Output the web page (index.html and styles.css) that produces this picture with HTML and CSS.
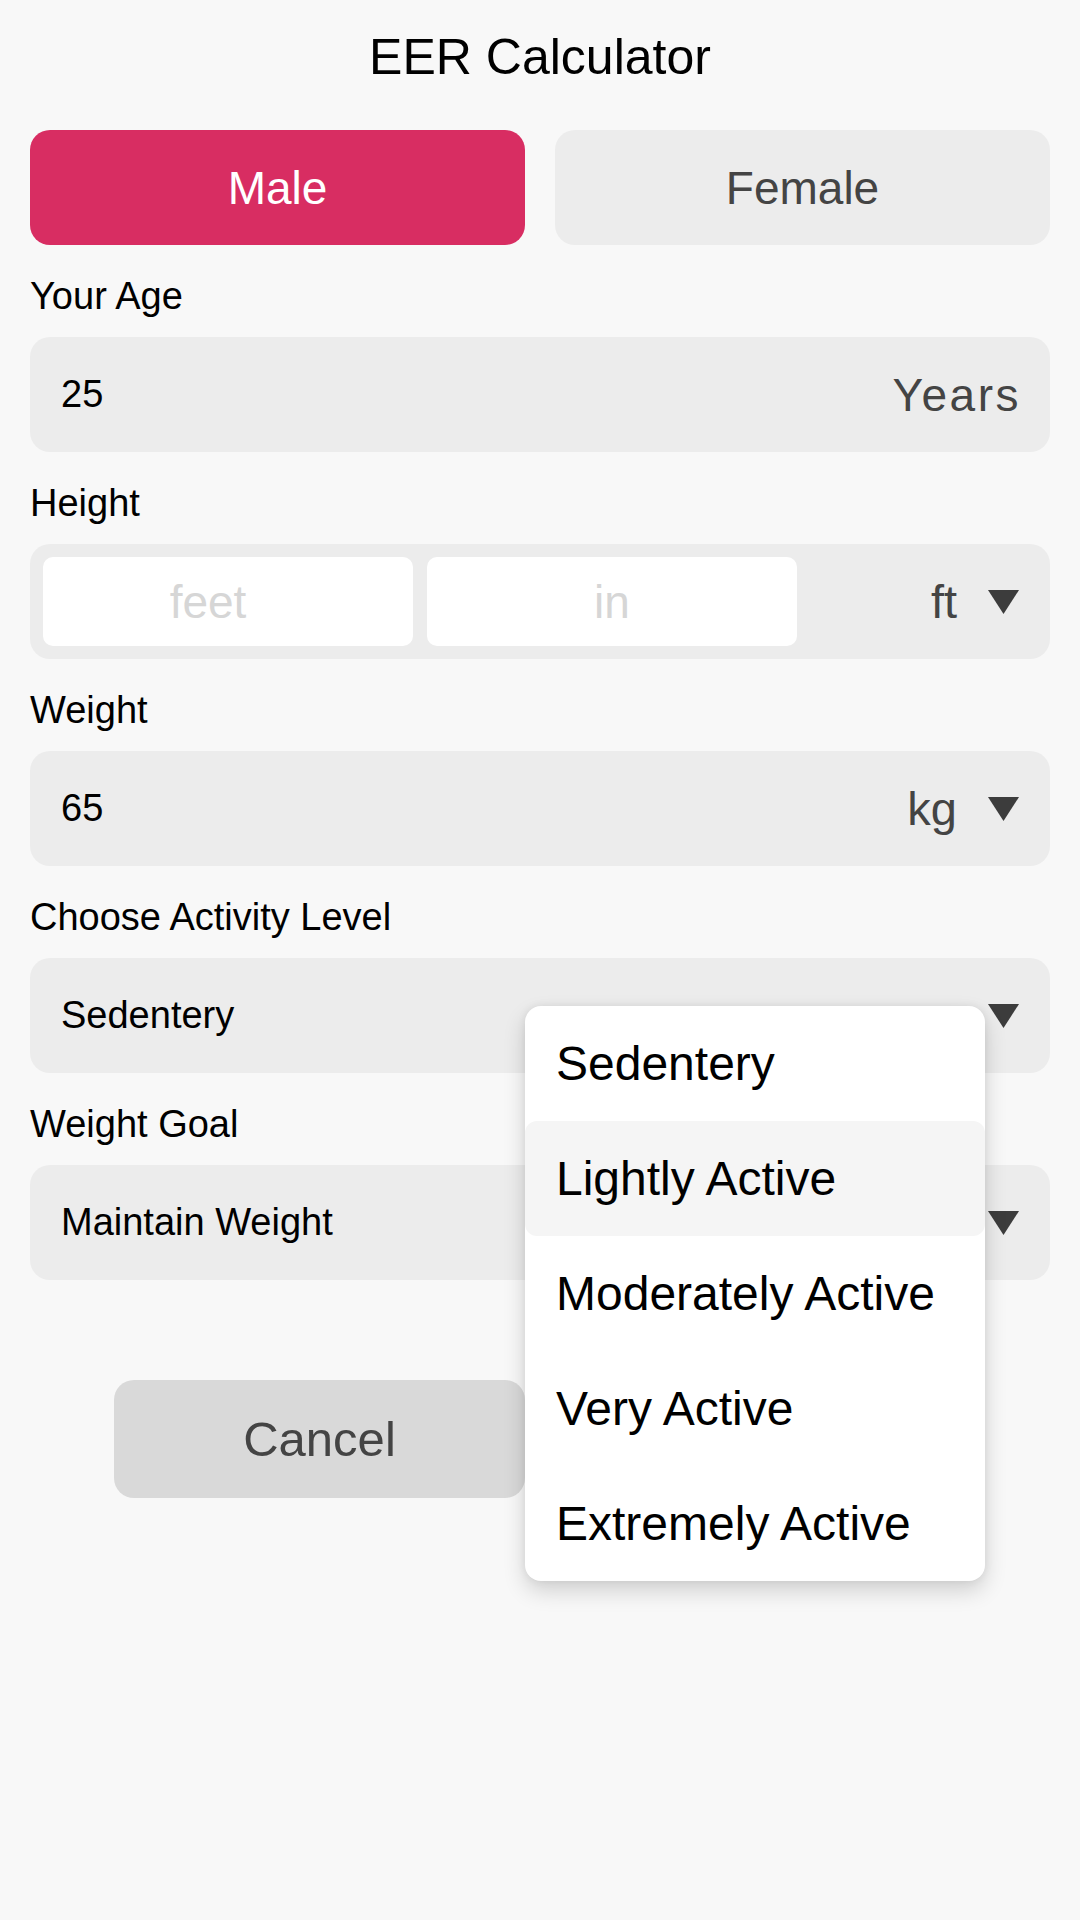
FILE: index.html
```html
<!DOCTYPE html>
<html>
<head>
<meta charset="utf-8">
<link rel="stylesheet" href="styles.css">
</head>
<body>
<div class="page">
  <h1 class="title">EER Calculator</h1>
  <div class="gender">
    <div class="gbtn active">Male</div>
    <div class="gbtn">Female</div>
  </div>

  <div class="label">Your Age</div>
  <div class="field">
    <span class="value">25</span>
    <span class="unit unit-years">Years</span>
  </div>

  <div class="label">Height</div>
  <div class="field field-height">
    <div class="subinput sub-feet">feet</div>
    <div class="subinput">in</div>
    <div class="unitsel">
      <span class="unit">ft</span>
      <svg class="caret" width="31" height="24" viewBox="0 0 31 24"><polygon points="0,0 31,0 15.5,24" fill="#3c3c3c"/></svg>
    </div>
  </div>

  <div class="label">Weight</div>
  <div class="field">
    <span class="value">65</span>
    <div class="unitsel">
      <span class="unit">kg</span>
      <svg class="caret" width="31" height="24" viewBox="0 0 31 24"><polygon points="0,0 31,0 15.5,24" fill="#3c3c3c"/></svg>
    </div>
  </div>

  <div class="label">Choose Activity Level</div>
  <div class="field">
    <span class="value">Sedentery</span>
    <svg class="caret" width="31" height="24" viewBox="0 0 31 24"><polygon points="0,0 31,0 15.5,24" fill="#3c3c3c"/></svg>
  </div>

  <div class="label">Weight Goal</div>
  <div class="field">
    <span class="value">Maintain Weight</span>
    <svg class="caret" width="31" height="24" viewBox="0 0 31 24"><polygon points="0,0 31,0 15.5,24" fill="#3c3c3c"/></svg>
  </div>

  <div class="actions">
    <div class="abtn cancel">Cancel</div>
    <div class="abtn calc"></div>
  </div>

  <ul class="menu">
    <li class="item">Sedentery</li>
    <li class="item hover">Lightly Active</li>
    <li class="item">Moderately Active</li>
    <li class="item">Very Active</li>
    <li class="item">Extremely Active</li>
  </ul>
</div>
</body>
</html>
```

FILE: styles.css
```css
* { box-sizing: border-box; }
html, body {
  margin: 0;
  padding: 0;
  background: #f8f8f8;
  font-family: "Liberation Sans", Arial, sans-serif;
  color: #000;
}
.page {
  position: relative;
  width: 1080px;
  min-height: 1920px;
  padding: 28px 30px 0 30px;
}
.title {
  margin: 0;
  font-weight: normal;
  font-size: 50px;
  line-height: 58px;
  text-align: center;
}
.gender {
  display: flex;
  gap: 30px;
  margin-top: 44px;
}
.gbtn {
  flex: 1;
  height: 115px;
  border-radius: 20px;
  background: #ececec;
  color: #444;
  font-size: 46px;
  display: flex;
  align-items: center;
  justify-content: center;
}
.gbtn.active {
  background: #d82d62;
  color: #fff;
}
.label {
  margin-top: 31px;
  margin-bottom: 20px;
  font-size: 38px;
  line-height: 41px;
}
.field {
  height: 115px;
  border-radius: 20px;
  background: #ececec;
  display: flex;
  align-items: center;
  padding: 0 31px;
}
.value {
  font-size: 38px;
  flex: 1;
}
.unit {
  font-size: 47px;
  color: #444;
}
.unit-years {
  font-size: 46px;
  letter-spacing: 2.5px;
  margin-right: -2px;
}
.unitsel {
  display: flex;
  align-items: center;
  gap: 31px;
}
.caret {
  display: block;
  flex: none;
}
.field-height {
  padding: 0 31px 0 13px;
  gap: 14px;
}
.field-height .unitsel {
  margin-left: auto;
}
.subinput {
  width: 370px;
  height: 89px;
  border-radius: 10px;
  background: #fff;
  color: #d6d6d6;
  font-size: 46px;
  display: flex;
  align-items: center;
  justify-content: center;
}
.sub-feet {
  padding-right: 40px;
}
.actions {
  display: flex;
  justify-content: center;
  gap: 30px;
  margin-top: 100px;
}
.abtn {
  width: 411px;
  height: 118px;
  border-radius: 20px;
  display: flex;
  align-items: center;
  justify-content: center;
  font-size: 49px;
}
.cancel {
  background: #d9d9d9;
  color: #444;
}
.calc {
  background: #d82d62;
}
.menu {
  position: absolute;
  left: 525px;
  top: 1006px;
  width: 460px;
  margin: 0;
  padding: 0;
  list-style: none;
  background: #fff;
  border-radius: 16px;
  box-shadow: 0 10px 22px rgba(0,0,0,0.16), 0 0 8px rgba(0,0,0,0.07);
}
.item {
  height: 115px;
  display: flex;
  align-items: center;
  padding-left: 31px;
  font-size: 48px;
  border-radius: 12px;
}
.item.hover {
  background: #f5f5f5;
}
```
